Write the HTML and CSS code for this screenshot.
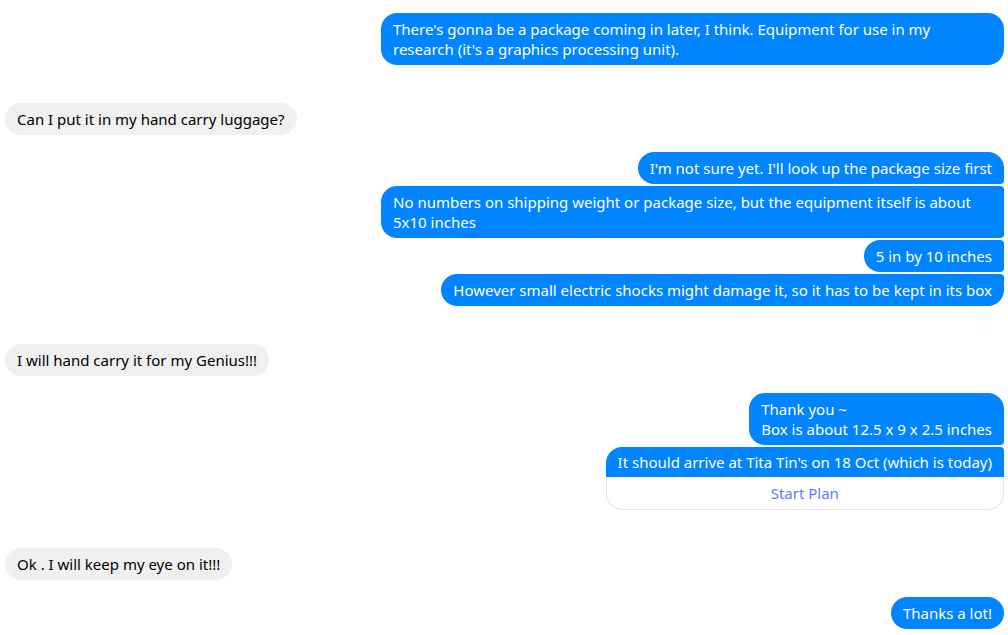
FILE: index.html
```html
<!DOCTYPE html>
<html lang="en">
<head>
<meta charset="utf-8">
<title>Chat</title>
<link rel="stylesheet" href="styles.css">
</head>
<body>
<main class="thread">
  <div class="group out">
    <div class="msg solo">There's gonna be a package coming in later, I think. Equipment for use in my research (it's a graphics processing unit).</div>
  </div>
  <div class="group in">
    <div class="msg solo">Can I put it in my hand carry luggage?</div>
  </div>
  <div class="group out">
    <div class="msg first">I'm not sure yet. I'll look up the package size first</div>
    <div class="msg mid">No numbers on shipping weight or package size, but the equipment itself is about 5x10 inches</div>
    <div class="msg mid">5 in by 10 inches</div>
    <div class="msg last">However small electric shocks might damage it, so it has to be kept in its box</div>
  </div>
  <div class="group in">
    <div class="msg solo">I will hand carry it for my Genius!!!</div>
  </div>
  <div class="group out">
    <div class="msg first">Thank you ~<br>Box is about 12.5 x 9 x 2.5 inches</div>
    <div class="card">
      <div class="card-text">It should arrive at Tita Tin's on 18 Oct (which is today)</div>
      <div class="card-action">Start Plan</div>
    </div>
  </div>
  <div class="group in">
    <div class="msg solo">Ok . I will keep my eye on it!!!</div>
  </div>
  <div class="group out">
    <div class="msg solo">Thanks a lot!</div>
  </div>
</main>
</body>
</html>
```
FILE: styles.css
```css
html, body {
  margin: 0;
  padding: 0;
  background: #ffffff;
}

body {
  font-family: "Noto Sans", "Open Sans", sans-serif;
  font-size: 15px;
  line-height: 20px;
}

.thread {
  display: flex;
  flex-direction: column;
  padding: 13px 4px 0 5px;
}

.group {
  display: flex;
  flex-direction: column;
  gap: 2px;
}

.group.out {
  align-items: flex-end;
  margin-bottom: 38px;
}

.group.in {
  align-items: flex-start;
  margin-bottom: 17px;
}

.group:last-child {
  margin-bottom: 0;
}

.msg {
  max-width: 599px;
  padding: 6px 12px;
  border-radius: 16px;
  word-wrap: break-word;
}

.out .msg {
  background: #0084ff;
  color: #ffffff;
}

.in .msg {
  background: #f1f0f0;
  color: #000000;
}

.out .msg.first {
  border-bottom-right-radius: 4px;
}

.out .msg.mid {
  border-top-right-radius: 4px;
  border-bottom-right-radius: 4px;
}

.out .msg.last {
  border-top-right-radius: 4px;
}

.card {
  display: flex;
  flex-direction: column;
}

.card-text {
  background: #0084ff;
  color: #ffffff;
  padding: 5px 12px;
  border-radius: 16px 4px 0 0;
}

.card-action {
  background: #ffffff;
  color: #6577ff;
  text-align: center;
  padding: 6px 12px;
  border: 1px solid #e3e5ea;
  border-top: 0;
  border-radius: 0 0 16px 16px;
}
```
